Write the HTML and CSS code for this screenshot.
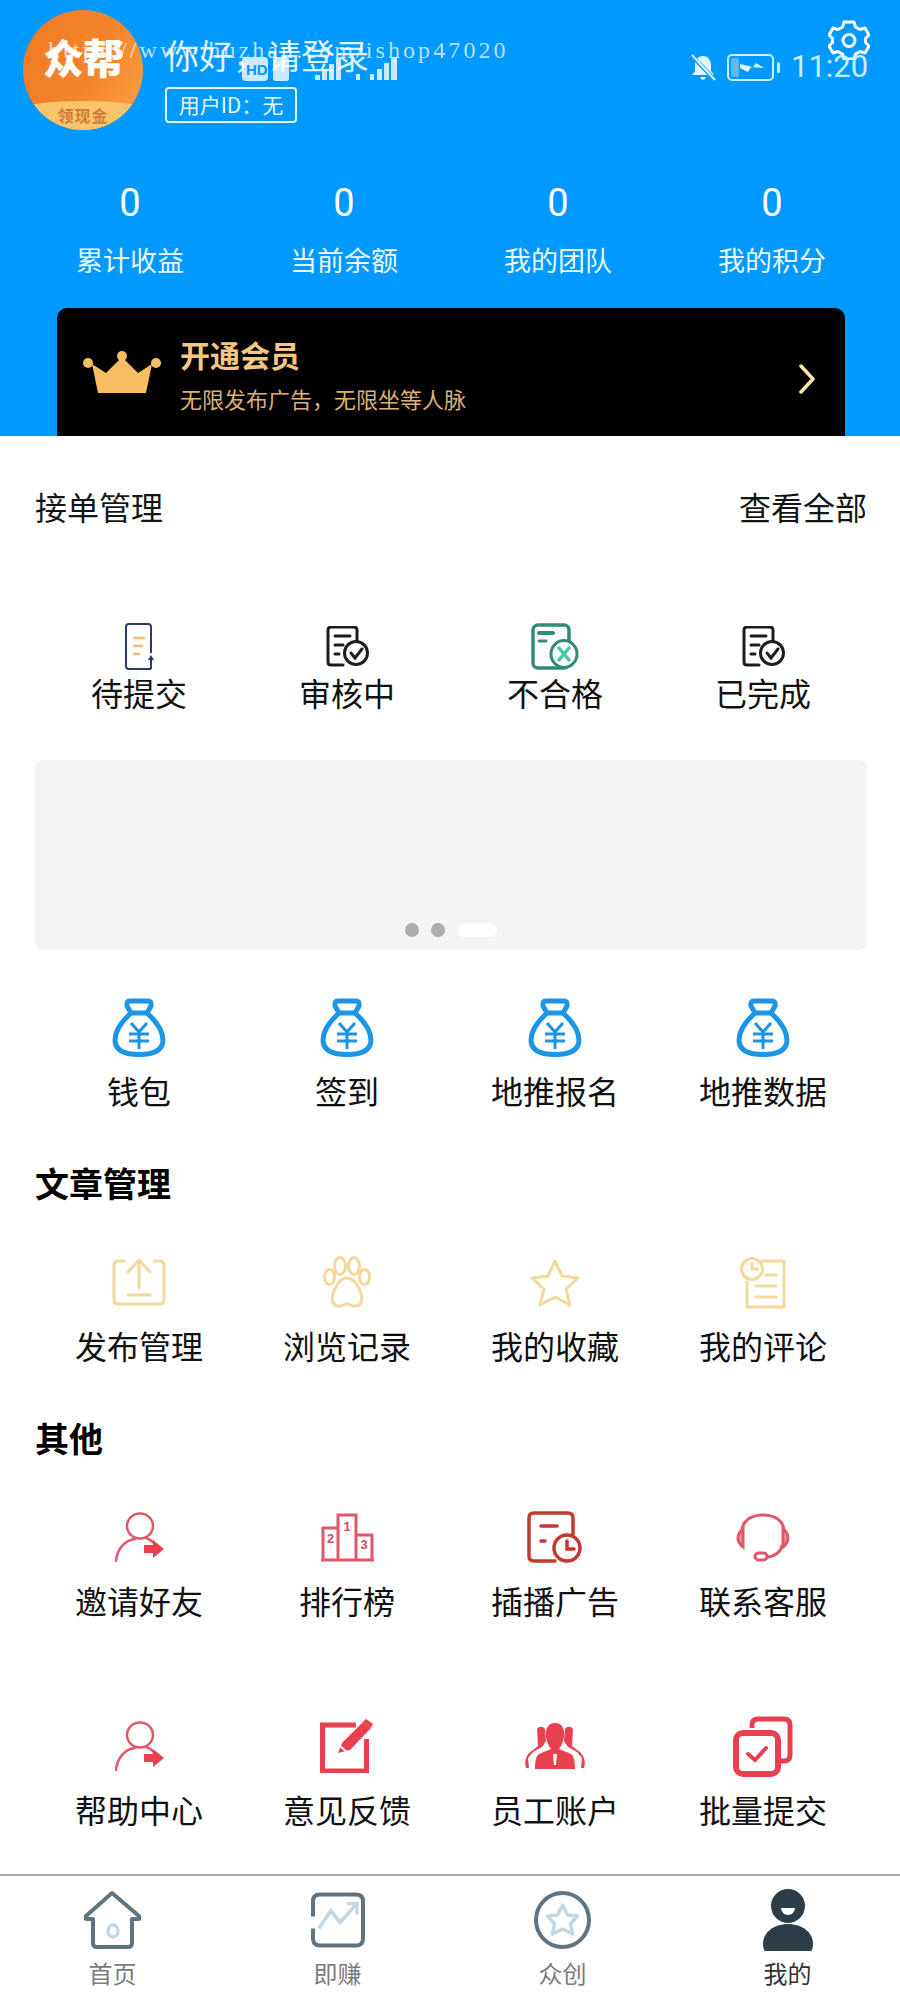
FILE: index.html
```html
<!DOCTYPE html>
<html lang="zh-CN">
<head>
<meta charset="utf-8">
<title>我的</title>
<link rel="stylesheet" href="styles.css">
</head>
<body>
<svg class="defs" width="0" height="0" aria-hidden="true">
  <symbol id="bag" viewBox="0 0 54 59">
    <g fill="none" stroke="#1b95e6" stroke-width="5" stroke-linecap="round" stroke-linejoin="round">
      <path d="M18 3h18q4 0 3 5l-4 7H19l-4-7q-1-5 3-5z"/>
      <path d="M19 15C9 24 3 34 3 42c0 10 9 14.500 24 14.500S51 52 51 42c0-8-6-18-16-27"/>
    </g>
    <path d="M19 25l8 9 8-9M17 36h20M17 43h20M27 34v17" fill="none" stroke="#1b95e6" stroke-width="3"/>
  </symbol>
  <symbol id="doc-check" viewBox="0 0 43 41">
    <g fill="none" stroke="#1d1d1f" stroke-width="3" stroke-linecap="round">
      <path d="M17 39H5q-3 0-3-3V4q0-3 3-3h23q3 0 3 3v10"/>
      <path d="M9 10h15M9 19h8M9 28h4"/>
      <circle cx="30" cy="27" r="11.500"/>
      <path d="M25 27l4 5 7-9"/>
    </g>
  </symbol>
  <symbol id="invite" viewBox="0 0 49 50">
    <g fill="none" stroke="#e0596b" stroke-width="2.500" stroke-linecap="round">
      <ellipse cx="25" cy="14" rx="13" ry="12.500"/>
      <path d="M1 49c1-12 9-21 19-22M31 26q4 1 8 5"/>
    </g>
    <path d="M29 33h9v-5l11 9-11 9v-5h-9z" fill="#e8404f"/>
  </symbol>
</svg>

<header class="hero">
  <div class="hero-top">
    <div class="avatar">
      <span class="avatar-name">众帮</span>
      <span class="avatar-cap">领现金</span>
    </div>
    <div class="profile">
      <div class="greeting">你好，请登录</div>
      <div class="user-id">用户ID：无</div>
    </div>
    <svg class="gear" viewBox="0 0 42 40" fill="none" stroke="#fff" stroke-width="3" stroke-linejoin="round">
      <path d="M16 2h10l1.500 5 4.500 2.500 5-1.500 4 7-3.500 3.500v4L41 26l-4 7-5-1.500L27.500 34 26 39H16l-1.500-5-4.500-2.500L5 33l-4-7 3.500-3.500v-4L1 15l4-7 5 1.500L14.500 7z"/>
      <circle cx="21" cy="20.500" r="6"/>
    </svg>
  </div>

  <svg class="status-left" viewBox="0 0 160 32" fill="#fff">
    <rect x="0" y="5" width="26" height="24" rx="4"/>
    <text x="4" y="23" class="status-hd">HD</text>
    <rect x="31" y="5" width="16" height="24" rx="3"/>
    <path d="M73 28h5v-5h-5zM80 28h5V17h-5zM87 28h5V12h-5zM94 28h5V6h-5zM114 28h4v-6h-4zM128 28h4v-6h-4zM135 28h5V17h-5zM142 28h5V11h-5zM149 28h6V5h-6z"/>
  </svg>
  <div class="status-right">
    <svg class="bell" viewBox="0 0 26 27">
      <path d="M13 2c5 0 8 4 8 9v6l3 4H2l3-4v-6c0-5 3-9 8-9zM10 23h6q-1 3-3 3t-3-3z" fill="#dff4ff"/>
      <path d="M1 1l24 25" stroke="#0099ff" stroke-width="4"/>
      <path d="M2 1l23 25" stroke="#dff4ff" stroke-width="2"/>
    </svg>
    <svg class="battery" viewBox="0 0 53 27">
      <rect x="1" y="1" width="45" height="25" rx="4" fill="none" stroke="#c8efff" stroke-width="2"/>
      <rect x="4" y="4" width="8" height="19" rx="2" fill="#5db9f5"/>
      <rect x="50" y="8" width="3" height="11" rx="1.500" fill="#c8efff"/>
      <path d="M13 10l13 3 3-4 8 5-13-1-3 5-8-4z" fill="#dff4ff"/>
    </svg>
    <span class="clock">11:20</span>
  </div>
  <div class="watermark">https://www.huzhan.com/ishop47020</div>

  <div class="stats">
    <div class="stat"><span class="stat-num">0</span><span class="stat-label">累计收益</span></div>
    <div class="stat"><span class="stat-num">0</span><span class="stat-label">当前余额</span></div>
    <div class="stat"><span class="stat-num">0</span><span class="stat-label">我的团队</span></div>
    <div class="stat"><span class="stat-num">0</span><span class="stat-label">我的积分</span></div>
  </div>

  <div class="vip">
    <svg class="crown" viewBox="0 0 78 42">
      <path d="M9 13l14 9L39 6l16 16 14-9-6 29H15z" fill="#f6bd62"/>
      <circle cx="39" cy="5" r="5" fill="#f6bd62"/>
      <circle cx="5" cy="12" r="5" fill="#f6bd62"/>
      <circle cx="73" cy="12" r="5" fill="#f6bd62"/>
    </svg>
    <div class="vip-text">
      <div class="vip-title">开通会员</div>
      <div class="vip-sub">无限发布广告，无限坐等人脉</div>
    </div>
    <svg class="vip-arrow" viewBox="0 0 16 30" fill="none" stroke="#f8e6a8" stroke-width="3.500" stroke-linecap="round" stroke-linejoin="round">
      <path d="M2 2l12 13L2 28"/>
    </svg>
  </div>
</header>

<main class="content">
  <div class="section-head">
    <span>接单管理</span>
    <span>查看全部</span>
  </div>

  <div class="grid grid-orders">
    <div class="cell">
      <div class="icon-box">
        <svg width="30" height="47" viewBox="0 0 30 47" fill="none">
          <path d="M27 30V4q0-3-3-3H5Q2 1 2 4v39q0 3 3 3h22" stroke="#2d3a66" stroke-width="2"/>
          <path d="M9 15h12M9 23h10M9 31h7" stroke="#f0bd6c" stroke-width="2.500"/>
          <path d="M27 46V36" stroke="#2d3a66" stroke-width="2"/>
          <path d="M24 37l3-5 3 5z" fill="#2d3a66"/>
        </svg>
      </div>
      <span class="cell-label">待提交</span>
    </div>
    <div class="cell">
      <div class="icon-box"><svg width="43" height="41"><use href="#doc-check"/></svg></div>
      <span class="cell-label">审核中</span>
    </div>
    <div class="cell">
      <div class="icon-box">
        <svg width="48" height="47" viewBox="0 0 48 47" fill="none">
          <rect x="2" y="2" width="36" height="43" rx="5" stroke="#2f8a76" stroke-width="3.500"/>
          <path d="M8 10h14" stroke="#2f8a76" stroke-width="4" stroke-linecap="round"/>
          <path d="M8 18h7" stroke="#2f8a76" stroke-width="3" stroke-linecap="round"/>
          <ellipse cx="33" cy="31" rx="13" ry="13.500" fill="#fff" stroke="#2f8a76" stroke-width="3"/>
          <path d="M28 25l10 12M38 25L28 37" stroke="#45c9ac" stroke-width="3.500" stroke-linecap="round"/>
        </svg>
      </div>
      <span class="cell-label">不合格</span>
    </div>
    <div class="cell">
      <div class="icon-box"><svg width="43" height="41"><use href="#doc-check"/></svg></div>
      <span class="cell-label">已完成</span>
    </div>
  </div>

  <div class="banner">
    <i class="dot"></i><i class="dot"></i><i class="dot-active"></i>
  </div>

  <div class="grid grid-tools">
    <div class="cell"><div class="icon-box"><svg width="54" height="59"><use href="#bag"/></svg></div><span class="cell-label">钱包</span></div>
    <div class="cell"><div class="icon-box"><svg width="54" height="59"><use href="#bag"/></svg></div><span class="cell-label">签到</span></div>
    <div class="cell"><div class="icon-box"><svg width="54" height="59"><use href="#bag"/></svg></div><span class="cell-label">地推报名</span></div>
    <div class="cell"><div class="icon-box"><svg width="54" height="59"><use href="#bag"/></svg></div><span class="cell-label">地推数据</span></div>
  </div>

  <h2 class="section-title">文章管理</h2>
  <div class="grid grid-after-title">
    <div class="cell">
      <div class="icon-box">
        <svg width="54" height="48" viewBox="0 0 54 48" fill="none" stroke="#f3d89b" stroke-width="3" stroke-linecap="round" stroke-linejoin="round">
          <path d="M12 3H6Q2 3 2 7v35q0 4 4 4h42q4 0 4-4V7q0-4-4-4h-6"/>
          <path d="M27 30V3M16 14L27 2l11 12M16 37h22"/>
        </svg>
      </div>
      <span class="cell-label">发布管理</span>
    </div>
    <div class="cell">
      <div class="icon-box">
        <svg width="48" height="52" viewBox="0 0 48 52" fill="none" stroke="#f3d89b" stroke-width="3">
          <ellipse cx="17" cy="10" rx="5.500" ry="8.500"/>
          <ellipse cx="31" cy="10" rx="5.500" ry="8.500"/>
          <ellipse cx="6.500" cy="21" rx="5" ry="7.500"/>
          <ellipse cx="41.500" cy="21" rx="5" ry="7.500"/>
          <path d="M24 22c7 0 12 9 14 16 2 7 0 12-6 12-4 0-5-2-8-2s-4 2-8 2c-6 0-8-5-6-12 2-7 7-16 14-16z"/>
        </svg>
      </div>
      <span class="cell-label">浏览记录</span>
    </div>
    <div class="cell">
      <div class="icon-box">
        <svg width="50" height="49" viewBox="0 0 50 49" fill="none" stroke="#f3d89b" stroke-width="3" stroke-linejoin="round">
          <path d="M25 3l7 15 16 2-12 11 4 16-15-8-15 8 4-16L2 20l16-2z"/>
        </svg>
      </div>
      <span class="cell-label">我的收藏</span>
    </div>
    <div class="cell">
      <div class="icon-box">
        <svg width="46" height="54" viewBox="0 0 46 54" fill="none" stroke="#f3d89b" stroke-width="3" stroke-linecap="round">
          <path d="M22 6h22v46H7V27"/>
          <circle cx="12" cy="14" r="10.500"/>
          <path d="M12 8v6h6M26 20h10M16 31h20M16 42h20"/>
        </svg>
      </div>
      <span class="cell-label">我的评论</span>
    </div>
  </div>

  <h2 class="section-title">其他</h2>
  <div class="grid grid-after-title">
    <div class="cell">
      <div class="icon-box"><svg width="49" height="50"><use href="#invite"/></svg></div>
      <span class="cell-label">邀请好友</span>
    </div>
    <div class="cell">
      <div class="icon-box">
        <svg width="53" height="49" viewBox="0 0 53 49" fill="none" stroke="#e0596b" stroke-width="3">
          <path d="M2 47V15h15v32zM17 47V2h18v45zM35 47V22h16v25zM0 47h53"/>
          <text x="26" y="18" class="rank">1</text>
          <text x="9.500" y="30" class="rank">2</text>
          <text x="43" y="36" class="rank">3</text>
        </svg>
      </div>
      <span class="cell-label">排行榜</span>
    </div>
    <div class="cell">
      <div class="icon-box">
        <svg width="56" height="52" viewBox="0 0 56 52" fill="none" stroke="#c23a2e" stroke-width="3.500" stroke-linecap="round">
          <path d="M28 50H7q-5 0-5-5V7q0-5 5-5h34q5 0 5 5v16"/>
          <path d="M14 15h16M14 30h4"/>
          <circle cx="40" cy="37" r="13"/>
          <path d="M40 30v8h7"/>
        </svg>
      </div>
      <span class="cell-label">插播广告</span>
    </div>
    <div class="cell">
      <div class="icon-box">
        <svg width="54" height="49" viewBox="0 0 54 49" fill="none" stroke="#e0596b" stroke-width="3">
          <path d="M6 18C6 8 15 2 27 2s21 6 21 16M46 32c-1 8-9 12-16 12"/>
          <path d="M7 16q-5 4-5 9t5 9zM47 16q5 4 5 9t-5 9z" fill="#eea0aa"/>
          <rect x="19" y="40" width="12" height="7" rx="3.500"/>
        </svg>
      </div>
      <span class="cell-label">联系客服</span>
    </div>
  </div>

  <div class="grid grid-last">
    <div class="cell">
      <div class="icon-box"><svg width="49" height="50"><use href="#invite"/></svg></div>
      <span class="cell-label">帮助中心</span>
    </div>
    <div class="cell">
      <div class="icon-box">
        <svg width="54" height="54" viewBox="0 0 54 54" fill="none">
          <path d="M36 6H2.500v46h44V20" stroke="#e8404f" stroke-width="5"/>
          <path d="M18 34l4-10L43 3l8 6-21 22z" fill="#e8404f"/>
          <path d="M20 27l7 6" stroke="#fff" stroke-width="2"/>
          <path d="M43 3l3-3 7 5-2 4z" fill="#e8404f"/>
        </svg>
      </div>
      <span class="cell-label">意见反馈</span>
    </div>
    <div class="cell">
      <div class="icon-box">
        <svg width="60" height="47" viewBox="0 0 60 47">
          <path d="M12 6c2-3 6-3 8 0l1 12-4 6-9 5-5 6 1 10H1C-1 38 1 31 8 27l5-4z" fill="#e8404f"/>
          <path d="M48 6c-2-3-6-3-8 0l-1 12 4 6 9 5 5 6-1 10h3c2-7 0-14-7-18l-5-4z" fill="#e8404f"/>
          <path d="M30 0c7 0 10 6 9 14-1 6-3 9-5 12l12 5c3 2 4 8 4 15H10c0-7 1-13 4-15l12-5c-2-3-4-6-5-12-1-8 2-14 9-14z" fill="#e8404f"/>
          <path d="M28 31h4l-1 11h-2z" fill="#fff"/>
        </svg>
      </div>
      <span class="cell-label">员工账户</span>
    </div>
    <div class="cell">
      <div class="icon-box">
        <svg width="60" height="61" viewBox="0 0 60 61" fill="none">
          <path d="M19 12V9q0-6 6-6h26q6 0 6 6v30q0 6-6 6h-5" stroke="#e8404f" stroke-width="5"/>
          <rect x="3" y="17" width="42" height="41" rx="7" stroke="#e8404f" stroke-width="6"/>
          <path d="M15 38l7 6 11-12" stroke="#e8404f" stroke-width="4" stroke-linecap="round"/>
        </svg>
      </div>
      <span class="cell-label">批量提交</span>
    </div>
  </div>
</main>

<nav class="tabbar">
  <div class="tab">
    <svg class="tab-icon" width="57" height="58" viewBox="0 0 57 58" fill="none">
      <path d="M9 28v24q0 4 4 4h31q4 0 4-4V28h6q3 0 1-3L28 2 2 25q-2 3 1 3z" stroke="#5f7480" stroke-width="4" stroke-linejoin="round"/>
      <ellipse cx="29" cy="40" rx="5" ry="6" stroke="#c3d7e4" stroke-width="3.500"/>
    </svg>
    <span class="tab-label">首页</span>
  </div>
  <div class="tab">
    <svg class="tab-icon" width="54" height="55" viewBox="0 0 54 55" fill="none">
      <path d="M2 24V9q0-7 7-7h36q7 0 7 7v37q0 7-7 7H9q-7 0-7-7V36" stroke="#5f7480" stroke-width="4"/>
      <path d="M8 36l12-18 9 12 16-18M36 11h10v11" stroke="#c3d7e4" stroke-width="3.500"/>
    </svg>
    <span class="tab-label">即赚</span>
  </div>
  <div class="tab">
    <svg class="tab-icon" width="57" height="58" viewBox="0 0 57 58" fill="none">
      <ellipse cx="28.500" cy="29" rx="26.500" ry="27" stroke="#5f7480" stroke-width="4"/>
      <path d="M28.500 14l5 10 10 1-7 8 2 10-10-5-10 5 2-10-7-8 10-1z" stroke="#c3d7e4" stroke-width="3.500" stroke-linejoin="round"/>
    </svg>
    <span class="tab-label">众创</span>
  </div>
  <div class="tab tab-active">
    <svg class="tab-icon" width="50" height="62" viewBox="0 0 50 62">
      <ellipse cx="25" cy="17" rx="17" ry="17" fill="#2d3c47"/>
      <path d="M18 19h14q-1 7-7 7t-7-7z" fill="#fff"/>
      <path d="M25 35c15 0 25 9 25 20 0 3-1 7-2 7H2c-1 0-2-4-2-7 0-11 10-20 25-20z" fill="#2d3c47"/>
    </svg>
    <span class="tab-label">我的</span>
  </div>
</nav>
</body>
</html>
```

FILE: styles.css
```css
* {
  box-sizing: border-box;
}

html,
body {
  margin: 0;
  padding: 0;
}

body {
  width: 900px;
  height: 2000px;
  display: flex;
  flex-direction: column;
  overflow: hidden;
  background: #fff;
  color: #111;
  font-family: "Noto Sans CJK SC", "Noto Sans", sans-serif;
}

.defs {
  position: absolute;
}

/* Blue profile header */
.hero {
  position: relative;
  height: 436px;
  flex: none;
  display: flex;
  flex-direction: column;
  background: #0099ff;
  color: #fff;
}

.hero-top {
  height: 130px;
  margin-top: 10px;
  padding: 0 30px 0 23px;
  display: flex;
  gap: 22px;
}

.avatar {
  width: 120px;
  height: 120px;
  flex: none;
  border-radius: 50%;
  overflow: hidden;
  display: flex;
  flex-direction: column;
  align-items: center;
  justify-content: space-between;
  background: linear-gradient(115deg, #f07a22 0%, #f5842c 55%, #fba044 100%);
}

.avatar-name {
  margin-top: 21px;
  font-size: 41px;
  line-height: 50px;
  font-weight: 900;
  letter-spacing: -1px;
}

.avatar-cap {
  width: 100%;
  height: 29px;
  border-radius: 50% 50% 0 0 / 8px 8px 0 0;
  background: #f9c56a;
  color: #d5793a;
  font-size: 16px;
  font-weight: 700;
  line-height: 28px;
  text-align: center;
  letter-spacing: 1px;
}

.profile {
  display: flex;
  flex-direction: column;
  align-items: flex-start;
  flex: 1;
}

.greeting {
  margin-top: 20px;
  font-size: 34px;
  line-height: 50px;
  color: rgba(255, 255, 255, 0.88);
}

.user-id {
  margin-top: 7px;
  width: 132px;
  height: 36px;
  border: 2px solid #e2f5ff;
  border-radius: 4px;
  font-size: 21px;
  line-height: 31px;
  text-align: center;
  color: #e8f7ff;
}

.gear {
  width: 42px;
  height: 40px;
  flex: none;
  margin-top: 10px;
}

/* Device status icons laid over the header */
.status-left {
  position: absolute;
  left: 242px;
  top: 52px;
  width: 160px;
  height: 32px;
  opacity: 0.8;
}

.status-hd {
  font-family: "Liberation Sans", sans-serif;
  font-size: 15px;
  font-weight: 700;
  fill: #0099ff;
}

.status-right {
  position: absolute;
  left: 690px;
  top: 53px;
  display: flex;
  align-items: center;
  gap: 11px;
}

.bell {
  width: 26px;
  height: 27px;
}

.battery {
  width: 53px;
  height: 27px;
}

.clock {
  font-family: Roboto, sans-serif;
  font-size: 31px;
  line-height: 28px;
  color: #c8efff;
}

.watermark {
  position: absolute;
  left: 48px;
  top: 33px;
  font-family: "Liberation Serif", serif;
  font-size: 24px;
  line-height: 34px;
  letter-spacing: 3.1px;
  color: rgba(255, 255, 255, 0.72);
  white-space: nowrap;
}

.stats {
  margin-top: 38px;
  padding: 0 23px;
  display: grid;
  grid-template-columns: repeat(4, 214px);
}

.stat {
  display: flex;
  flex-direction: column;
  align-items: center;
}

.stat-num {
  font-family: Roboto, sans-serif;
  font-size: 38px;
  line-height: 50px;
}

.stat-label {
  margin-top: 10px;
  font-size: 27px;
  line-height: 44px;
  color: #eaf7ff;
}

.vip {
  margin: auto 55px 0 57px;
  height: 128px;
  padding: 0 30px 0 26px;
  display: flex;
  align-items: center;
  background: #000;
  border-radius: 10px 10px 0 0;
}

.crown {
  width: 78px;
  height: 42px;
  flex: none;
  margin-right: 19px;
}

.vip-text {
  flex: 1;
  margin-top: 2px;
}

.vip-title {
  font-size: 30px;
  line-height: 44px;
  font-weight: 700;
  color: #f6c77e;
}

.vip-sub {
  margin-top: 6px;
  font-size: 22px;
  line-height: 32px;
  color: #dcb077;
}

.vip-arrow {
  width: 16px;
  height: 30px;
  flex: none;
  margin-top: 14px;
}

/* Page body */
.content {
  flex: 1;
  padding: 0 33px 0 35px;
}

.section-head {
  height: 140px;
  display: flex;
  align-items: center;
  justify-content: space-between;
  font-size: 32px;
  color: #151515;
}

.section-title {
  margin: 41px 0 0;
  height: 60px;
  font-size: 34px;
  line-height: 60px;
  font-weight: 700;
  color: #000;
}

.grid {
  display: grid;
  grid-template-columns: repeat(4, 208px);
}

.grid-orders {
  margin-top: 46px;
}

.grid-tools {
  margin-top: 47px;
}

.grid-after-title {
  margin-top: 39px;
}

.grid-last {
  margin-top: 94px;
}

.cell {
  display: flex;
  flex-direction: column;
  align-items: center;
}

.icon-box {
  height: 60px;
  margin-bottom: 11px;
  display: flex;
  align-items: center;
  justify-content: center;
}

.grid-orders .icon-box {
  height: 48px;
  margin-bottom: 0;
}

.cell-label {
  font-size: 32px;
  line-height: 44px;
  color: #111;
}

.rank {
  font-family: "Liberation Sans", sans-serif;
  font-size: 13px;
  font-weight: 700;
  text-anchor: middle;
  fill: #c9515f;
  stroke: none;
}

.banner {
  margin-top: 46px;
  height: 190px;
  padding: 0 370px 13px 370px;
  display: flex;
  align-items: flex-end;
  justify-content: center;
  gap: 12px;
  background: #f3f4f6;
  border-radius: 8px;
}

.dot {
  width: 14px;
  height: 14px;
  flex: none;
  border-radius: 50%;
  background: #adadad;
}

.dot-active {
  width: 40px;
  height: 14px;
  flex: none;
  border-radius: 7px;
  background: #fff;
}

/* Bottom navigation */
.tabbar {
  height: 126px;
  flex: none;
  display: grid;
  grid-template-columns: repeat(4, 225px);
  border-top: 2px solid #aaa;
}

.tab {
  display: flex;
  flex-direction: column;
  align-items: center;
  padding-top: 13px;
}

.tab-icon {
  height: 62px;
  flex: none;
}

.tab-label {
  margin-top: 4px;
  font-size: 24px;
  line-height: 36px;
  color: #7b7b7b;
}

.tab-active .tab-label {
  color: #333;
}
```
